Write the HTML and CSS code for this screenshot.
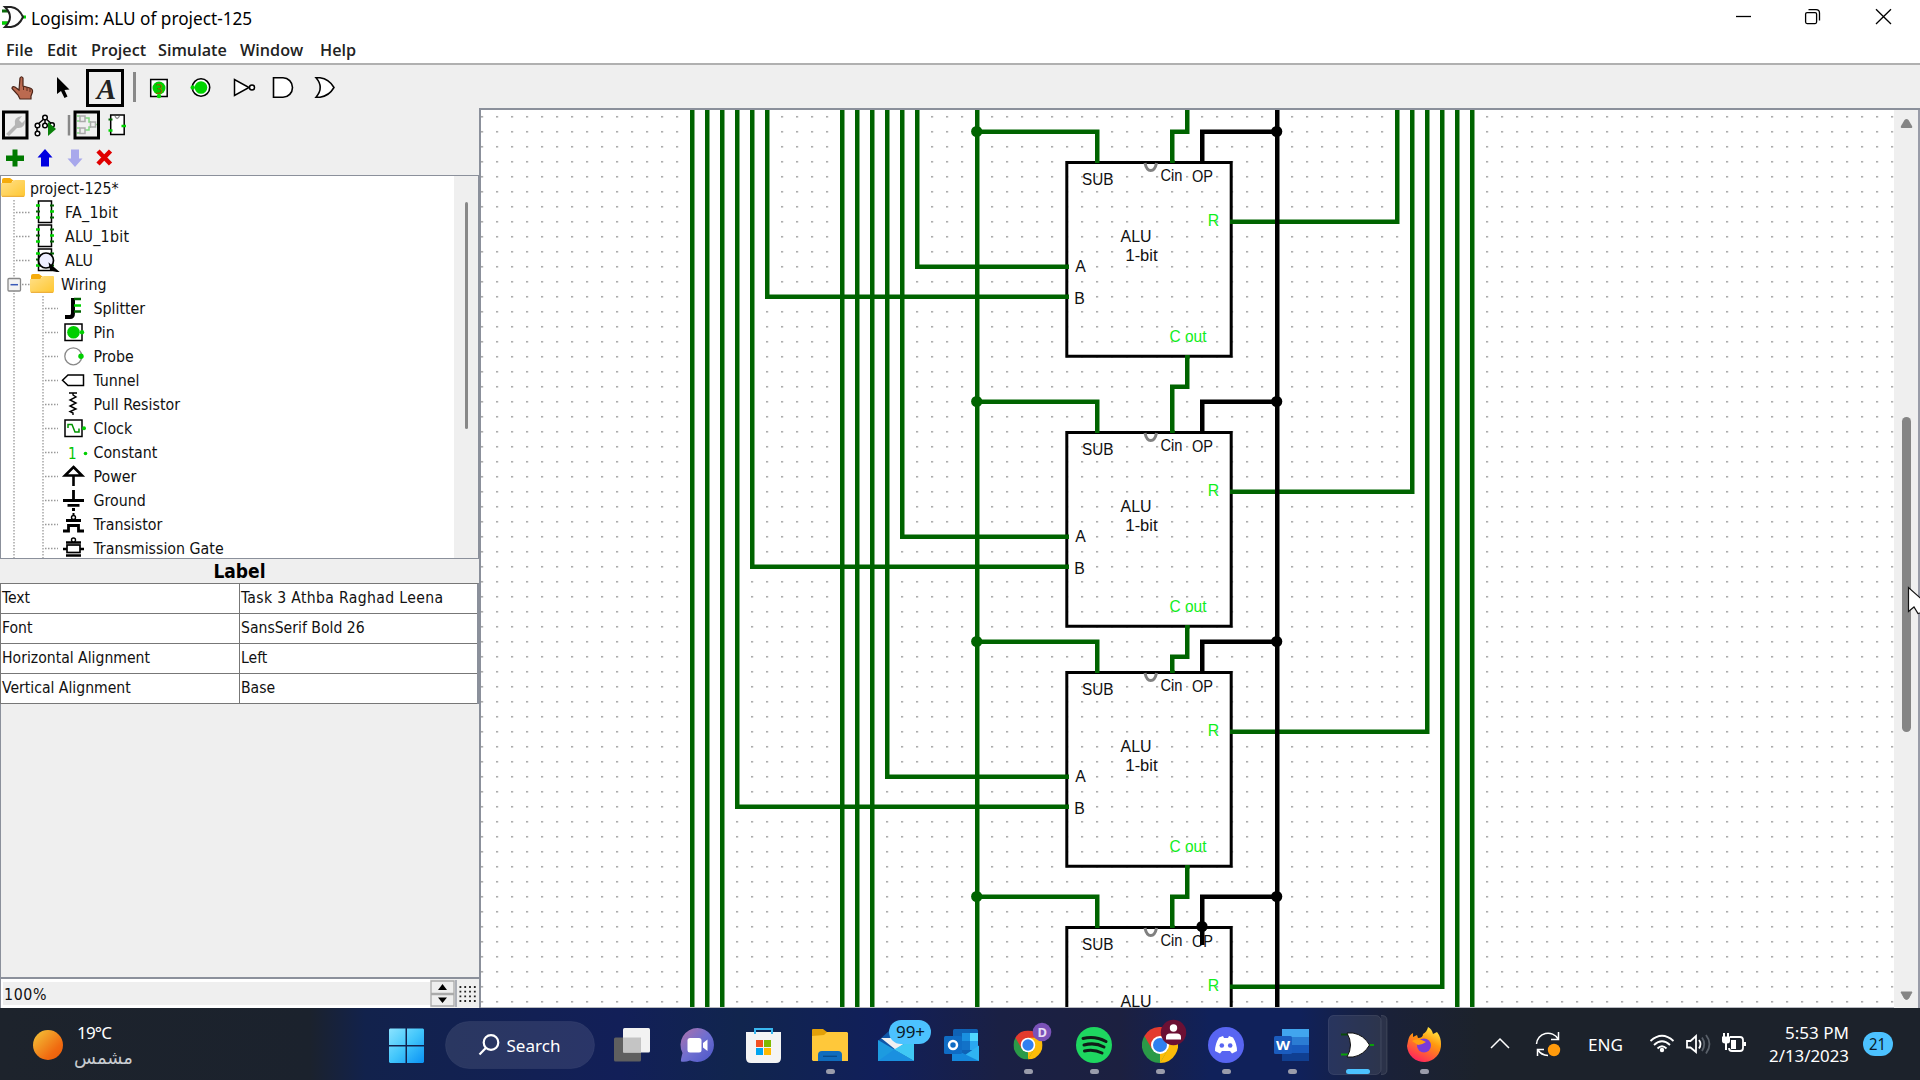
FILE: index.html
```html
<!DOCTYPE html>
<html lang="en">
<head>
<meta charset="utf-8">
<title>Logisim: ALU of project-125</title>
<link rel="stylesheet" href="styles.css">
</head>
<body>
<svg class="defs" width="0" height="0" aria-hidden="true">
  <defs>
    <linearGradient id="gFolder" x1="0" y1="0" x2="1" y2="1"><stop offset="0" stop-color="#ffe08a"/><stop offset="1" stop-color="#ffc730"/></linearGradient>
    <linearGradient id="gSun" x1="0" y1="0" x2="1" y2="1"><stop offset="0" stop-color="#f3c83a"/><stop offset=".7" stop-color="#f06a10"/><stop offset="1" stop-color="#e85a08"/></linearGradient>
    <linearGradient id="gWin" gradientUnits="userSpaceOnUse" x1="389" y1="1028" x2="424" y2="1063"><stop offset="0" stop-color="#8ce4ff"/><stop offset=".5" stop-color="#42c6fb"/><stop offset="1" stop-color="#0a92f5"/></linearGradient>
    <symbol id="folder" viewBox="0 0 24 20"><path d="M1 5V2Q1 0 3 0H9L13 3H11V6H1Z" fill="#f5ab0b"/><path d="M0 5H10Q12 2 14 2H23Q24 2 24 3V17Q24 19 22 19H2Q0 19 0 17Z" fill="url(#gFolder)"/><path d="M1 18.3H23" stroke="#e9a93a"/></symbol>
    <symbol id="chip" viewBox="0 0 18 24"><path d="M2.500 1H15.500V22.500H2.500Z" fill="#fff" stroke="#000" stroke-width="1.500"/><path d="M0 5.500H4M0 17.500H4M14 11.500H18" stroke="#00d400" stroke-width="2.500"/><path d="M0 11.500H4M14 5.500H18M14 17.500H18" stroke="#006400" stroke-width="2"/></symbol>
    <pattern id="grid" patternUnits="userSpaceOnUse" x="661.250" y="115.950" width="15" height="15"><rect width="1.600" height="1.600" fill="#8c8c8c"/></pattern>
    <g id="alu">
      <path class="body" d="M1066.800 162.500H1231.200V356.300H1066.800Z"/>
      <path class="notch" d="M1145 163C1147 173 1154.500 173 1156.500 163"/>
      <text x="1082" y="185" textLength="31.500" lengthAdjust="spacingAndGlyphs">SUB</text>
      <text x="1160.500" y="181" textLength="22" lengthAdjust="spacingAndGlyphs">Cin</text>
      <text x="1192" y="182" textLength="21" lengthAdjust="spacingAndGlyphs">OP</text>
      <text x="1120.500" y="242.200" textLength="31" lengthAdjust="spacingAndGlyphs">ALU</text>
      <text x="1125.500" y="260.500" textLength="32" lengthAdjust="spacingAndGlyphs">1-bit</text>
      <text x="1075.300" y="272">A</text>
      <text x="1074.300" y="303.500">B</text>
      <text class="out" x="1207.700" y="226">R</text>
      <text class="out" x="1169.500" y="341.500" textLength="37" lengthAdjust="spacingAndGlyphs">C out</text>
      <path class="wire" d="M977.250 131.750H1097.250V163M1187.250 355V359M1172.250 160V163"/>
      <circle class="dot" cx="976.700" cy="131.500" r="5.600"/>
      <path class="wire bus" d="M1202.250 162V131.750H1277.250"/>
      <circle cx="1276.700" cy="131.500" r="5.600"/>
    </g>
    <symbol id="chrome" viewBox="-18 -18 36 36"><path d="M0 0L-15.600 -9A18 18 0 0 1 15.600 -9Z" fill="#e33b2e"/><path d="M0 0L15.600 -9A18 18 0 0 1 0 18Z" fill="#fbbc09"/><path d="M0 0L0 18A18 18 0 0 1 -15.600 -9Z" fill="#2a9a48"/><path d="M0 -9H15.600L8 4Z" fill="#fbbc09"/><path d="M-15.600 -9L-7.800 4.500L0 -9Z" fill="#e33b2e"/><path d="M-7.800 4.500L0 18L7.800 4.500Z" fill="#2a9a48"/><path d="M0 18L8 4.500L0 4Z" fill="#fbbc09"/><circle r="9" fill="#fff"/><circle r="7" fill="#2f80f0"/></symbol>
  </defs>
</svg>

<header class="titlebar">
  <svg class="app-icon" width="28" height="32"><path d="M2 11H11M2 23H11" stroke="#0a6b0a" stroke-width="3"/><path d="M2 23H9M21 17H26" stroke="#00d400" stroke-width="3"/><path d="M5 7H11Q19 8 23 17Q19 26 11 27H5Q15 17 5 7Z" fill="#fff" stroke="#222" stroke-width="2"/></svg>
  <span class="title">Logisim: ALU of project-125</span>
  <svg class="controls" width="240" height="32" viewBox="1680 0 240 32" fill="none" stroke="#000" stroke-width="1.300"><path d="M1736 16.500H1751"/><rect x="1805.600" y="12.600" width="11" height="11" rx="1.500"/><path d="M1808.500 9.600H1816Q1819.500 9.600 1819.500 13V20.500"/><path d="M1876 9.200L1891 24M1891 9.200L1876 24"/></svg>
</header>
<nav class="menubar"><span>File</span><span>Edit</span><span>Project</span><span>Simulate</span><span>Window</span><span>Help</span></nav>

<div class="toolbar">
  <svg viewBox="2 69 38 38"><path d="M20 78Q21.500 75.500 23 78V86L30 88Q33 89 32.500 92L31 96V99H20L18 95L12 88.500Q12 86 15 87L19 90Z" fill="#bb6a50" stroke="#4a2418" stroke-width="1.200"/><path d="M23.500 86V90M27 87V91M30 88V92" stroke="#5a2c1c"/></svg>
  <svg viewBox="44 69 38 38"><path d="M57 77V94L61 91L64.500 98L67.500 96.500L64.500 90L69.500 89.500Z"/></svg>
  <div class="tool active">A</div>
  <i class="sep"></i>
  <svg viewBox="140 69 38 38"><rect x="150.700" y="79.500" width="16.500" height="17" fill="#fff" stroke="#000" stroke-width="1.500"/><circle cx="159" cy="88" r="6.500" fill="#00cf00"/><circle cx="159" cy="96" r="2.200" fill="#00e000"/><text x="155" y="93.500" font-size="14" fill="#8a6a00">3</text></svg>
  <svg viewBox="182 69 38 38"><circle cx="201" cy="87.500" r="8.700" fill="#fff" stroke="#000" stroke-width="1.600"/><circle cx="201" cy="87.500" r="6.300" fill="#00d400"/><circle cx="192.700" cy="87.500" r="2.200" fill="#00d400"/></svg>
  <svg viewBox="224 69 38 38" fill="#fff" stroke="#000" stroke-width="1.500"><path d="M234.500 79.500V95.500L249 87.500Z"/><circle cx="252" cy="87.500" r="2.500"/></svg>
  <svg viewBox="266 69 38 38" fill="#fff" stroke="#000" stroke-width="1.600"><path d="M273.500 77.800H283A9.500 9.700 0 0 1 283 97.200H273.500Z"/></svg>
  <svg viewBox="308 69 38 38" fill="#fff" stroke="#000" stroke-width="1.500"><path d="M316 77.800H320Q329 79 334 87.500Q329 96 320 97.200H316Q324.500 87.500 316 77.800Z"/></svg>
</div>

<main class="workspace">
  <aside class="sidebar">
    <svg class="panel-tools" width="479" height="66" viewBox="0 109 479 66">
      <g fill="none" stroke="#000" stroke-width="3"><rect x="3.500" y="112" width="23.500" height="26"/><rect x="75" y="112" width="23.500" height="26"/></g>
      <path d="M69 115V135.500" stroke="#888" stroke-width="2.500"/>
      <path d="M6 134L15 125Q13 117 22 116L19 120L22 123L25 120Q25 129 17 128L9 136Z" fill="#b5b5b5"/>
      <g fill="#fff" stroke="#000" stroke-width="1.500"><path d="M45 118L37 125V134M45 118L53 125M45 118V125" fill="none"/><circle cx="45" cy="117.500" r="2.300"/><circle cx="37.500" cy="125.500" r="2.300"/><circle cx="45" cy="125.500" r="2.300"/><circle cx="52" cy="125" r="2.300"/><circle cx="37.500" cy="133.500" r="2.300"/></g>
      <path d="M48 122V136L56 129Z" fill="#0a800a"/>
      <path d="M77 116H80M77 121H80M77 128H80M77 133H80M85 118H89V122H91M85 130H89V127H91M95.500 124.500H97" fill="none" stroke="#7fdc7f" stroke-width="1.500"/><g fill="#eee" stroke="#aaa" stroke-width="1.500"><rect x="80" y="116" width="5" height="5.500"/><rect x="80" y="128" width="5" height="5.500"/><rect x="90.500" y="122" width="5" height="5"/></g>
      <rect x="110.700" y="115" width="13.500" height="19.500" fill="#fff" stroke="#000" stroke-width="1.500"/><path d="M115 116Q117 121 119.500 116" fill="none" stroke="#888" stroke-width="1.300"/><path d="M108.500 119.500H112.500" stroke="#006400" stroke-width="2"/><path d="M108.500 130.500H112.500M121.500 126H126" stroke="#00d400" stroke-width="2.500"/>
      <path d="M12.500 149.500H17.500V155.500H24V161H17.500V166.500H12.500V161H6V155.500H12.500Z" fill="#007a00"/>
      <path d="M45 149L52.500 157.500H49V166.500H41V157.500H37.500Z" fill="#0000e0"/>
      <path d="M75 167L67.500 158.500H71V149.500H79V158.500H82.500Z" fill="#a8a8ec"/>
      <path d="M98 151L110.500 164M110.500 151L98 164" stroke="#e00000" stroke-width="4.500"/>
    </svg>
    <section class="tree">
      <div class="rows">
        <div class="row root"><svg viewBox="0 0 26 24"><use href="#folder" x="1" y="2" width="24" height="20"/></svg><span>project-125*</span></div>
        <div class="row circ"><svg viewBox="0 0 60 24"><path class="tl" d="M14 0V24M16 12.500H31"/><use href="#chip" x="36" y="0" width="18" height="24"/></svg><span>FA_1bit</span></div>
        <div class="row circ"><svg viewBox="0 0 60 24"><path class="tl" d="M14 0V24M16 12.500H31"/><use href="#chip" x="36" y="0" width="18" height="24"/></svg><span>ALU_1bit</span></div>
        <div class="row circ"><svg viewBox="0 0 60 24"><path class="tl" d="M14 0V24M16 12.500H31"/><use href="#chip" x="36" y="0" width="18" height="24"/><circle cx="46" cy="12.500" r="7.500" fill="#eef" stroke="#000" stroke-width="1.700"/><path d="M50 17L57 23L51 22Z" stroke="#000" stroke-width="2"/></svg><span>ALU</span></div>
        <div class="row group"><svg viewBox="0 0 60 24"><path class="tl" d="M14 0V24M22 12.500H30"/><rect x="8" y="6.500" width="12.500" height="12.500" rx="1" fill="#f2f2f2" stroke="#888" stroke-width="1.300"/><path d="M10.500 12.700H18" stroke="#3a5ab8" stroke-width="1.500"/><use href="#folder" x="30" y="2" width="24" height="20"/></svg><span>Wiring</span></div>
        <div class="row leaf"><svg viewBox="0 0 90 24"><path class="tl" d="M14 0V24M43 0V24M45 12.500H58"/><path d="M65 21H70Q73 21 73 17V2" fill="none" stroke="#000" stroke-width="4"/><path d="M74 3H81M74 15.500H81" stroke="#006400" stroke-width="2.500"/><path d="M74 9.500H81" stroke="#00d400" stroke-width="2.500"/></svg><span>Splitter</span></div>
        <div class="row leaf"><svg viewBox="0 0 90 24"><path class="tl" d="M14 0V24M43 0V24M45 12.500H58"/><rect x="65" y="4" width="17" height="16.500" fill="#fff" stroke="#000" stroke-width="1.500"/><circle cx="73.500" cy="12.300" r="6.300" fill="#00cf00"/><circle cx="82" cy="12.300" r="2.200" fill="#00cf00"/></svg><span>Pin</span></div>
        <div class="row leaf"><svg viewBox="0 0 90 24"><path class="tl" d="M14 0V24M43 0V24M45 12.500H58"/><circle cx="73.300" cy="12.300" r="8.500" fill="#fff" stroke="#888" stroke-width="1.300"/><circle cx="81" cy="12.300" r="2.700" fill="#00cf00"/></svg><span>Probe</span></div>
        <div class="row leaf"><svg viewBox="0 0 90 24"><path class="tl" d="M14 0V24M43 0V24M45 12.500H58"/><path d="M62.500 12.300L68 7H83.500V17.500H68Z" fill="#fff" stroke="#000" stroke-width="1.500"/></svg><span>Tunnel</span></div>
        <div class="row leaf"><svg viewBox="0 0 90 24"><path class="tl" d="M14 0V24M43 0V24M45 12.500H58"/><path d="M69 1H77M73 1V3L76 5L70 8L76 11L70 14L76 17L70 19.500L73 21V23" fill="none" stroke="#000" stroke-width="1.400"/></svg><span>Pull Resistor</span></div>
        <div class="row leaf"><svg viewBox="0 0 90 24"><path class="tl" d="M14 0V24M43 0V24M45 12.500H58"/><rect x="65" y="4" width="17" height="16.500" fill="#fff" stroke="#000" stroke-width="1.500"/><path d="M68 12V8.500H72L75 16H79V12.500" fill="none" stroke="#009400" stroke-width="1.500"/><circle cx="84" cy="12.300" r="2" fill="#00cf00"/></svg><span>Clock</span></div>
        <div class="row leaf"><svg viewBox="0 0 90 24"><path class="tl" d="M14 0V24M43 0V24M45 12.500H58"/><text x="68" y="19" font-size="15" fill="#00c400">1</text><circle cx="85.500" cy="13.500" r="1.800" fill="#00cf00"/></svg><span>Constant</span></div>
        <div class="row leaf"><svg viewBox="0 0 90 24"><path class="tl" d="M14 0V24M43 0V24M45 12.500H58"/><path d="M73.500 3L82 11.500H65ZM73.500 11V22" fill="#fff" stroke="#000" stroke-width="2.600"/></svg><span>Power</span></div>
        <div class="row leaf"><svg viewBox="0 0 90 24"><path class="tl" d="M14 0V24M43 0V24M45 12.500H58"/><path d="M73.500 2V12M63 12.500H84M67.500 17.300H79.500M72 21.500H75" stroke="#000" stroke-width="2.800"/></svg><span>Ground</span></div>
        <div class="row leaf"><svg viewBox="0 0 90 24"><path class="tl" d="M14 0V24M43 0V24M45 12.500H58"/><path d="M66 8.500H81M63 19H68.500V13.500H78.500V19H84" fill="none" stroke="#000" stroke-width="2.800"/><circle cx="73.500" cy="5.500" r="2" fill="#fff" stroke="#000" stroke-width="1.400"/><path d="M73.500 1V3" stroke="#000" stroke-width="2"/></svg><span>Transistor</span></div>
        <div class="row leaf"><svg viewBox="0 0 90 24"><path class="tl" d="M14 0V24M43 0V24M45 12.500H58"/><path d="M66 6.500H81M66 19.500H81M63 13H67M80 13H84" stroke="#000" stroke-width="2.400"/><rect x="67" y="9" width="13" height="7.500" fill="#fff" stroke="#000" stroke-width="1.700"/><circle cx="73.500" cy="4" r="2" fill="#fff" stroke="#000" stroke-width="1.400"/></svg><span>Transmission Gate</span></div>
      </div>
      <div class="tree-scroll"><i></i></div>
    </section>
    <h2 class="props-title">Label</h2>
    <div class="props">
      <div>Text</div><div class="wide">Task 3 Athba Raghad Leena</div>
      <div>Font</div><div>SansSerif Bold 26</div>
      <div>Horizontal Alignment</div><div>Left</div>
      <div>Vertical Alignment</div><div>Base</div>
    </div>
    <div class="filler"></div>
    <footer class="zoombar">
      <span class="zoom">100%</span>
      <svg width="49" height="29" viewBox="431 979 49 29"><path d="M432 981H455V1006H432Z" fill="#eee" stroke="#aaa" stroke-width="1.300"/><path d="M432 994H455" stroke="#aaa" stroke-width="2.500"/><path d="M439 990L443.500 984L448 990ZM439 997.500L443.500 1003L448 997.500Z"/><path d="M457 980V1007" stroke="#8b909b" stroke-width="1.300"/><g stroke="#222" stroke-width="1.800" stroke-dasharray="1.800 3"><path d="M460.500 987H478M460.500 991.700H478M460.500 996.300H478M460.500 1001H478"/></g></svg>
    </footer>
  </aside>

  <section class="canvas">
    <svg width="1413" height="898" viewBox="481 110 1413 898">
      <rect x="481" y="110" width="1413" height="898" fill="#fff"/>
      <rect x="481" y="110" width="1413" height="898" fill="url(#grid)"/>
      <path class="wire" d="M692.250 110V1008M707.250 110V1008M722.250 110V1008M842.250 110V1008M857.250 110V1008M872.250 110V1008M977.250 110V1008M1457.250 110V1008M1472.250 110V1008"/>
      <g class="blocks">
        <use href="#alu"/>
        <use href="#alu" y="270"/>
        <use href="#alu" y="510"/>
        <use href="#alu" y="765"/>
      </g>
      <path class="wire" d="M767.250 110V296.750H1069M917.250 110V266.750H1069M752.250 110V566.750H1069M902.250 110V536.750H1069M737.250 110V806.750H1069M887.250 110V776.750H1069"/>
      <path class="wire" d="M1187.250 110V131.750H1172.250V163M1187.250 355V386.750H1172.250V433M1187.250 625V656.750H1172.250V673M1187.250 865V896.750H1172.250V928"/>
      <path class="wire" d="M1230 221.750H1397.250V110M1230 491.750H1412.250V110M1230 731.750H1427.250V110M1230 986.750H1442.250V110"/>
      <path class="wire bus" d="M1277.250 110V1008M1202.250 926V945"/>
      <circle cx="1202" cy="926.500" r="5.600"/>
      <path d="M481 1007.500H1894" stroke="#b8bac0"/>
    </svg>
    <svg class="vscroll" width="26" height="898" viewBox="1894 110 26 898"><path d="M1894 110H1920V1008H1894Z" fill="#efefef"/><path d="M1902.500 128Q1900 128 1901 126L1904.500 120Q1906.500 118 1908.500 120L1912 126Q1913 128 1910.500 128Z" fill="#858585"/><path d="M1901 991.500L1904.500 998Q1906.500 1000 1908.500 998L1912 991.500Z" transform="translate(0 .5)" fill="#858585" stroke="#858585"/><rect x="1902" y="417" width="9" height="315" rx="4.500" fill="#858585"/><path d="M1919 110V1008" stroke="#999ca8" stroke-width="2"/><path d="M1908.500 558V577.500L1913.500 573L1917 579.500L1922 578V570Z" transform="translate(0 0)" fill="none"/><path d="M1908.500 588V612L1914 607.500L1918 614L1922 613V600Z" transform="translate(0 -.5)" fill="#fff" stroke="#111" stroke-width="1.200"/></svg>
  </section>
</main>

<footer class="taskbar">
  <svg width="1920" height="72" viewBox="0 1008 1920 72">
    <circle cx="48" cy="1045" r="15" fill="url(#gSun)"/>
    <text x="77" y="1039" textLength="35">19°C</text>
    <text class="ar" x="133" y="1064" direction="rtl">مشمس</text>
    <path d="M390 1028.500H405.500V1045H389V1029.500ZM407 1028.500H423L424 1029.500V1045H407ZM389 1046.500H405.500V1063H390L389 1062ZM407 1046.500H424V1062L423 1063H407Z" fill="url(#gWin)"/>
    <rect x="445.500" y="1021.500" width="149" height="47" rx="23.500" fill="#fff" fill-opacity=".1" stroke="#fff" stroke-opacity=".05"/>
    <g fill="none" stroke="#fff" stroke-width="2.200"><circle cx="491" cy="1042.500" r="7.300"/><path d="M485.800 1048L479.500 1054.500"/></g>
    <text x="506.500" y="1051.500" textLength="54">Search</text>
    <rect x="614" y="1037.500" width="27" height="24" rx="1.500" fill="#5f5f5f"/><rect x="623" y="1028" width="27" height="24.500" rx="1.500" fill="#f2f2f2"/><path d="M623 1037.500H641V1052.500H623Z" fill="#c4c4c4"/>
    <linearGradient id="gTeams" x1="0" y1="0" x2="1" y2="1"><stop offset="0" stop-color="#b070a8"/><stop offset=".5" stop-color="#6f6fd0"/><stop offset="1" stop-color="#4a55c8"/></linearGradient>
    <path d="M697.500 1028A17 17 0 1 1 690 1060.500Q685 1062.500 681 1061.500Q680.500 1060 682.500 1053A17 17 0 0 1 697.500 1028Z" fill="url(#gTeams)"/><rect x="687.500" y="1038" width="14" height="14.500" rx="2.500" fill="#fff"/><path d="M703 1043L707.500 1039.500V1051L703 1047.500Z" fill="#fff"/>
    <path d="M746 1032H781V1058Q781 1063 776 1063H751Q746 1063 746 1058Z" fill="#f4f4f4"/><path d="M756 1040H763V1047H756Z" fill="#f25022"/><path d="M764 1040H771V1047H764Z" fill="#7fba00"/><path d="M756 1048H763V1055H756Z" fill="#00a4ef"/><path d="M764 1048H771V1055H764Z" fill="#ffb900"/>
    <path d="M755 1034V1029H772V1034" fill="none" stroke="#3ab8f0" stroke-width="2"/>
    <path d="M812 1037V1030Q812 1029 813 1029H823L827 1032V1037Z" fill="#e3a008"/><path d="M812 1036L824 1035L827 1032H847L848 1033V1061H813L812 1060Z" fill="#ffc83a"/><path d="M818 1061V1055Q818 1051 822 1051H838Q842 1051 842 1055V1061Z" fill="#0f6cbd"/><path d="M823 1056.300H837" stroke="#084a88" stroke-width="1.300"/>
    <path d="M878 1041L890 1030H902L914 1041V1050H878Z" fill="#0f56a8"/><path d="M881 1038H911L896 1050Z" fill="#f0f0f0"/><path d="M878 1040L914 1061H878Z" fill="#1d9be0"/><path d="M914 1038V1061L894 1049.500Z" fill="#40c8f4"/><path d="M878 1061L894 1049.500L914 1061Z" fill="#1a90e0"/><rect x="889" y="1020" width="42" height="24" rx="12" fill="#4cc2ff"/><text class="badge" x="896" y="1038" textLength="29">99+</text>
    <rect x="953" y="1029" width="25" height="28" rx="1.500" fill="#0f62b5"/><path d="M962 1033H970V1041H962Z" fill="#1a90e0"/><path d="M970 1033H978V1041H970Z" fill="#50d8ff"/><path d="M962 1041H970V1050H962Z" fill="#1272c8"/><path d="M970 1041H978V1050H970Z" fill="#2aa8f0"/><path d="M952 1061V1050L965 1055L979 1045.500V1061Z" fill="#2fb4f2"/><path d="M952 1048L979 1061H952Z" fill="#1488dc"/><rect x="944" y="1036" width="18" height="18" rx="1.500" fill="#0f6cc4"/><circle cx="953" cy="1045" r="4" fill="none" stroke="#fff" stroke-width="2.500"/>
    <use href="#chrome" x="1013.500" y="1030.500" width="29" height="29"/><circle cx="1042" cy="1032" r="9.300" fill="#7a52b8"/><text x="1037.500" y="1036.500" class="small letter">D</text>
    <circle cx="1094" cy="1045" r="18" fill="#1ed760"/><path d="M1083 1038.500Q1095 1035.500 1106 1041.500M1084 1045Q1095 1042 1104 1047M1084.500 1051Q1094 1049 1102 1053" fill="none" stroke="#101c18" stroke-width="3" stroke-linecap="round"/>
    <use href="#chrome" x="1142" y="1027" width="36" height="36"/><circle cx="1173.500" cy="1032.500" r="12.700" fill="#6b1034"/><circle cx="1173.500" cy="1028" r="3.700" fill="#fff"/><path d="M1166 1039.500V1037Q1166 1033.500 1170 1033.500H1177Q1181 1033.500 1181 1037V1039.500Z" fill="#fff"/>
    <circle cx="1226" cy="1045" r="18" fill="#5865f2"/><path d="M1219 1037.500L1223 1036L1224 1038H1228L1229 1036L1233 1037.500Q1237 1044 1237 1051L1232 1053.500L1230 1051H1222L1220 1053.500L1215 1051Q1215 1044 1219 1037.500Z" fill="#fff"/><circle cx="1221.800" cy="1045.500" r="2.300" fill="#5865f2"/><circle cx="1230.200" cy="1045.500" r="2.300" fill="#5865f2"/>
    <path d="M1282 1029H1309V1037H1282Z" fill="#41a5ee"/><path d="M1282 1037H1309V1045H1282Z" fill="#2b7cd3"/><path d="M1282 1045H1309V1053H1282Z" fill="#185abd"/><path d="M1282 1053H1309V1061H1282Z" fill="#103f91"/><rect x="1274" y="1036" width="18" height="18" rx="1.500" fill="#1b5cbe"/><text x="1276" y="1050" class="small" textLength="14" lengthAdjust="spacingAndGlyphs">W</text>
    <path d="M1381 1015.500H1382Q1387 1015.500 1387 1020.500V1069.500Q1387 1074.500 1382 1074.500H1381" fill="#fff" fill-opacity=".08" stroke="#fff" stroke-opacity=".12"/><rect x="1328.500" y="1015.500" width="52.500" height="59" rx="5" fill="#fff" fill-opacity=".09" stroke="#fff" stroke-opacity=".1"/><path d="M1341 1034.500H1350" stroke="#0a4a0a" stroke-width="2"/><path d="M1341 1054.500H1350M1368 1045H1374" stroke="#0aa00a" stroke-width="2"/><path d="M1347 1033H1353Q1364 1035 1369.500 1045Q1364 1055 1353 1057H1347Q1354 1045 1347 1033Z" fill="#fff" stroke="#111"/>
    <linearGradient id="gFox" x1=".8" y1="0" x2=".3" y2="1"><stop offset="0" stop-color="#fff04a"/><stop offset=".4" stop-color="#ff980e"/><stop offset="1" stop-color="#ff2060"/></linearGradient>
    <path d="M1408 1041Q1409 1035 1413 1033V1037L1417 1035L1418 1038Q1423 1038 1423 1034Q1427 1032 1428 1027Q1432 1029 1433 1034L1437 1032Q1441 1037 1441 1044A17 17 0 0 1 1407 1046Z" fill="url(#gFox)"/><circle cx="1424" cy="1045.500" r="7" fill="#7a3bd8"/><path d="M1412 1041Q1418 1037 1426 1042Q1422 1045 1418 1045Z" fill="#ffa010"/>
    <g fill="#9a9cab"><rect x="826" y="1069" width="9" height="5" rx="2.500"/><rect x="1024" y="1069" width="9" height="5" rx="2.500"/><rect x="1090" y="1069" width="9" height="5" rx="2.500"/><rect x="1156" y="1069" width="9" height="5" rx="2.500"/><rect x="1222" y="1069" width="9" height="5" rx="2.500"/><rect x="1288" y="1069" width="9" height="5" rx="2.500"/><rect x="1420" y="1069" width="9" height="5" rx="2.500"/></g><rect x="1346" y="1069" width="24" height="5" rx="2.500" fill="#4cc2ff"/>
    <g fill="none" stroke="#fff" stroke-width="1.500"><path d="M1491 1048L1500 1039L1509 1048"/><path d="M1536.500 1044A11.500 11.500 0 0 1 1558 1039M1558.500 1032V1039.500H1551M1537.500 1056V1049.500H1544M1538 1050Q1541 1055 1548 1055.500"/></g><circle cx="1554" cy="1050" r="6.200" fill="#ff9a0c"/>
    <text x="1588" y="1051" textLength="35" lengthAdjust="spacingAndGlyphs">ENG</text>
    <g fill="none" stroke="#fff" stroke-width="1.800"><path d="M1650.500 1041Q1662 1030.500 1673.500 1041M1654 1045Q1662 1037.500 1670 1045M1657.500 1048.500Q1662 1044 1666.500 1048.500"/><path d="M1687 1041H1690.500L1696 1036V1052L1690.500 1047.500H1687Z"/><path d="M1699 1040Q1702 1044 1699 1048.500"/><path d="M1702 1037.500Q1706.500 1044 1702 1051M1706 1035Q1713 1044 1706 1053.500" stroke="#596069"/><path d="M1730 1037H1740Q1743 1037 1743 1040V1048Q1743 1051 1740 1051H1732Q1729 1051 1729 1048"/></g><circle cx="1662" cy="1050" r="2.200" fill="#fff"/><path d="M1731 1040H1736V1049H1731ZM1743.500 1042H1746V1046H1743.500ZM1722 1036.500H1730V1041Q1730 1043.500 1727 1043.500V1050H1725V1043.500Q1722 1043 1722 1041ZM1723 1033H1725V1037H1723ZM1727 1033H1729V1037H1727Z" fill="#fff"/>
    <text x="1785" y="1038.500" textLength="64" lengthAdjust="spacingAndGlyphs">5:53 PM</text><text x="1769" y="1061.500" textLength="80" lengthAdjust="spacingAndGlyphs">2/13/2023</text>
    <rect x="1863" y="1032" width="30" height="24" rx="12" fill="#4cc2ff"/><text class="badge" x="1869" y="1050" textLength="17" lengthAdjust="spacingAndGlyphs">21</text>
  </svg>
</footer>
</body>
</html>
```
FILE: styles.css
```css
* { box-sizing: border-box; }
body {
  margin: 0;
  width: 1920px;
  height: 1080px;
  overflow: hidden;
  display: flex;
  flex-direction: column;
  background: #fff;
  color: #111;
  font-family: "DejaVu Sans Condensed", "DejaVu Sans", sans-serif;
  font-stretch: condensed;
  font-size: 15.8px;
}
svg { display: block; flex: none; }
.defs { position: absolute; }

.titlebar { height: 33px; display: flex; align-items: flex-start; }
.title { margin-left: 3px; flex: 1; font: 17.2px/37px "Noto Sans", sans-serif; color: #000; }
.menubar {
  height: 32px;
  display: grid;
  grid-template-columns: 41px 44px 67px 82px 80px 60px;
  padding-left: 6px;
  font: 600 16.2px/34px "Open Sans", sans-serif;
  color: #222;
  border-bottom: 2px solid #b0b0b0;
}
.toolbar { height: 43px; display: flex; gap: 4px; padding: 4px 0 0 2px; background: #efefef; }
.toolbar svg, .tool { width: 38px; height: 38px; }
.tool.active { border: 3px solid #000; padding-left: 3px; font: italic bold 29px/34px "Liberation Serif", serif; text-align: center; color: #222; }
.sep { width: 3px; height: 30px; margin: 3px 0 0 5px; background: #888; }

.workspace { display: flex; height: 900px; }
.sidebar { width: 481px; display: flex; flex-direction: column; background: #efefef; border-right: 2px solid #8b909b; }
.panel-tools { margin-top: 1px; }
.tree { height: 384px; display: flex; border: 1.5px solid #8b909b; background: #fff; overflow: hidden; }
.rows { flex: 1; }
.row { height: 24px; display: flex; align-items: center; white-space: nowrap; margin-left: -1px; }
.row svg { height: 24px; }
.row span { line-height: 22px; padding-top: 1px; }
.root svg { width: 26px; margin-right: 4px; }
.circ svg { width: 60px; margin-right: 5px; }
.circ span { letter-spacing: .3px; }
.group svg { width: 60px; margin-right: 1px; }
.leaf svg { width: 90px; margin-right: 3.5px; }
.tl { fill: none; stroke: #999; stroke-width: 1.3; stroke-dasharray: 1.5 1.5; }
.tree-scroll { width: 24px; background: #efefef; padding: 26px 0 0 11px; }
.tree-scroll i { display: block; width: 3px; height: 227px; border-radius: 2px; background: #888; }
.props-title { margin: 0; height: 24px; font: bold 19px/25px "DejaVu Sans Condensed", "DejaVu Sans", sans-serif; font-stretch: condensed; text-align: center; color: #000; }
.props { display: grid; grid-template-columns: 239px 1fr; grid-auto-rows: 30px; border-top: 1px solid #777; border-right: 2px solid #8b909b; font-size: 15.6px; line-height: 29px; }
.props div { background: #fff; border-bottom: 1px solid #777; border-left: 1px solid #777; padding-left: 1px; white-space: nowrap; }
.props .wide { letter-spacing: .35px; }
.filler { flex: 1; border-left: 1px solid #8b909b; border-bottom: 2px solid #8b909b; }
.zoombar { height: 29px; display: flex; border-left: 1px solid #8b909b; }
.zoom { flex: 1; border: solid #fff; border-width: 3px 0 3px 2px; line-height: 26px; letter-spacing: .6px; padding-left: 1px; }

.canvas { flex: 1; display: flex; height: 900px; border-top: 2px solid #8b909b; }
#alu text { font: 15.8px "Liberation Sans", sans-serif; fill: #111; }
#alu .out { fill: #10ee20; }
.body { fill: none; stroke: #000; stroke-width: 3; }
.notch { fill: none; stroke: #808080; stroke-width: 3; }
.wire { fill: none; stroke: #006400; stroke-width: 4.5; }
.dot { fill: #006400; }
.wire.bus { stroke: #000; }

.taskbar {
  height: 72px;
  background: linear-gradient(90deg, #1d232c 0, #1b222d 310px, #12224c 365px, #121f58 620px, #11254e 740px, #111f5a 880px, #1a2044 1000px, #1c2040 1120px, #10215a 1210px, #10215a 1300px, #1a2138 1390px, #1c222b 1480px, #1c222b 100%);
}
.taskbar text { font: 17px "Noto Sans", sans-serif; fill: #fff; }
.taskbar .ar { font: 18px "DejaVu Sans", sans-serif; fill: #c8ccd0; }
.taskbar .badge { fill: #0a1a28; }
.taskbar .small { font: bold 13px "Noto Sans", sans-serif; }
.taskbar .letter { fill: #e8dff5; }
```
